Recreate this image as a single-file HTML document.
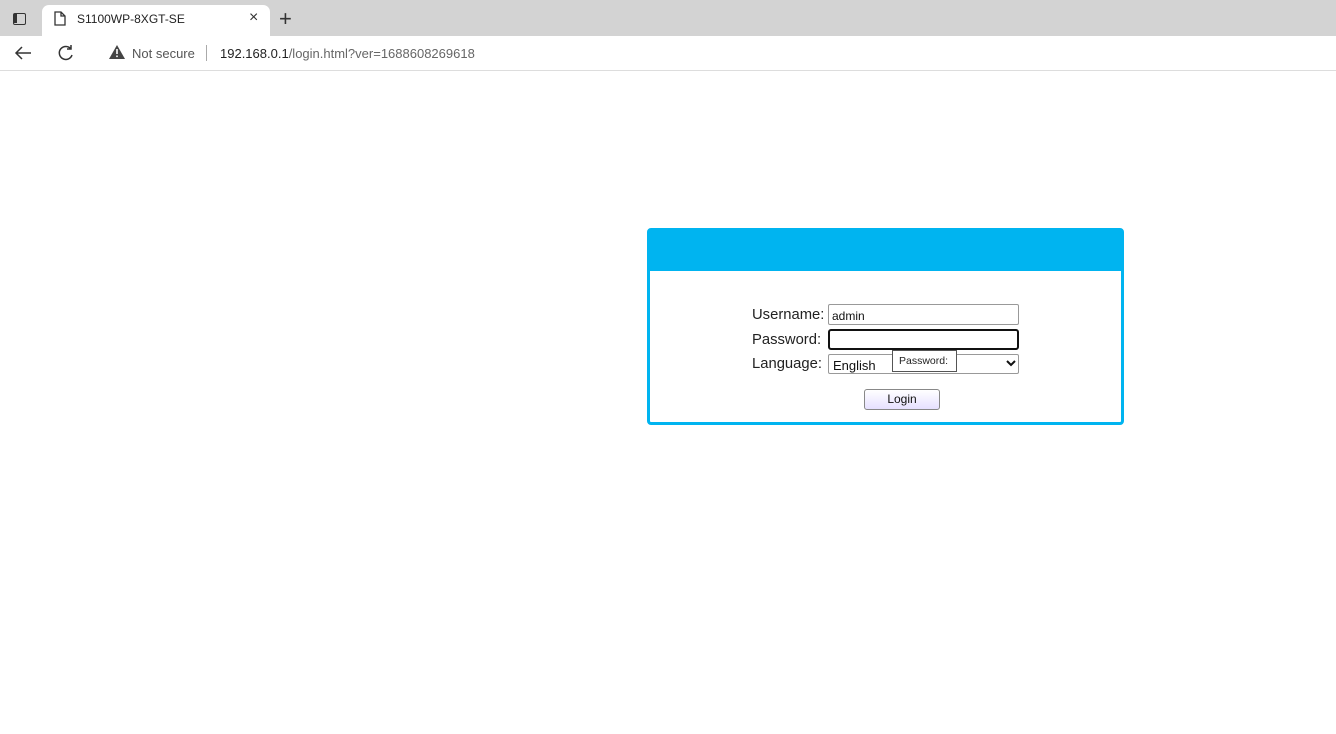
<!DOCTYPE html>
<html><head><meta charset="utf-8"><style>
*{box-sizing:border-box;margin:0;padding:0}
body{width:1336px;height:734px;background:#fff;font-family:"Liberation Sans",sans-serif;position:relative;overflow:hidden}
.abs{position:absolute}
.lbl{font-size:14.8px;color:#222;width:74px;white-space:nowrap}
</style></head><body>
<div class="abs" style="left:0;top:0;width:1336px;height:36px;background:#d3d3d3"></div>
<div class="abs" style="left:42px;top:5px;width:228px;height:31px;background:#fff;border-radius:7px 7px 0 0"></div>
<div class="abs" style="left:13px;top:13px;width:13px;height:12px;border:1.5px solid #333;border-radius:2px"><div style="position:absolute;left:0;top:0;width:3px;height:9px;background:#333"></div></div>
<svg class="abs" style="left:54px;top:11px" width="12" height="15"><path d="M1 1h6l4 4v9H1z M7 1v4h4" fill="none" stroke="#333" stroke-width="1.3"/></svg>
<div class="abs" style="left:77px;top:12px;font-size:12px;color:#222">S1100WP-8XGT-SE</div>
<div class="abs" style="left:249px;top:9px;font-size:16px;color:#333">×</div>
<div class="abs" style="left:279px;top:6px;font-size:22px;color:#333;font-weight:300">+</div>
<div class="abs" style="left:0;top:36px;width:1336px;height:35px;background:#fff;border-bottom:1px solid #ddd"></div>
<svg class="abs" style="left:14px;top:45px" width="18" height="16"><path d="M17 8H2 M8 2L2 8l6 6" fill="none" stroke="#333" stroke-width="1.5"/></svg>
<svg class="abs" style="left:57px;top:44px" width="18" height="18"><path d="M14 5A6.5 6.5 0 1 0 15 11 M14 1v4h-4" fill="none" stroke="#333" stroke-width="1.5"/></svg>
<svg class="abs" style="left:109px;top:45px" width="16" height="14"><path d="M8 0L16 14H0z" fill="#444"/><rect x="7.2" y="4" width="1.6" height="5" fill="#fff"/><rect x="7.2" y="10.5" width="1.6" height="1.6" fill="#fff"/></svg>
<div class="abs" style="left:132px;top:46px;font-size:13px;color:#555">Not secure</div>
<div class="abs" style="left:206px;top:45px;width:1px;height:16px;background:#aaa"></div>
<div class="abs" style="left:220px;top:46px;font-size:13px;color:#222">192.168.0.1<span style="color:#666">/login.html?ver=1688608269618</span></div>

<div class="abs" style="left:647px;top:228px;width:477px;height:197px;border:3px solid #00b4f0;border-radius:4px;background:#fff">
 <div style="height:40px;background:#00b4f0"></div>
</div>
<div class="abs lbl" style="left:752px;top:307px">Username:</div>
<div class="abs lbl" style="left:752px;top:332px">Password:</div>
<div class="abs lbl" style="left:752px;top:356px">Language:</div>
<div class="abs" style="left:828px;top:304px;width:191px;height:21px;border:1px solid #999;border-radius:2px;font-size:12px;padding:4px 3px;color:#111">admin</div>
<div class="abs" style="left:828px;top:329px;width:191px;height:21px;border:2px solid #111;border-radius:3px"></div>
<div class="abs" style="left:828px;top:354px;width:191px;height:20px;border:1px solid #999;border-radius:2px;font-size:13px;padding:3px 4px;color:#111">English</div>
<svg class="abs" style="left:1006px;top:360px" width="10" height="8"><path d="M1 1l4 4 4-4" fill="none" stroke="#111" stroke-width="2"/></svg>
<div class="abs" style="left:892px;top:350px;width:65px;height:22px;border:1px solid #555;background:#fff;font-size:10.5px;padding:4px 6px;color:#222">Password:</div>
<div class="abs" style="left:864px;top:389px;width:76px;height:21px;border:1px solid #888;border-radius:3px;background:linear-gradient(#fff,#e6e0ff);font-size:12px;text-align:center;line-height:19px;color:#111">Login</div>
</body></html>
